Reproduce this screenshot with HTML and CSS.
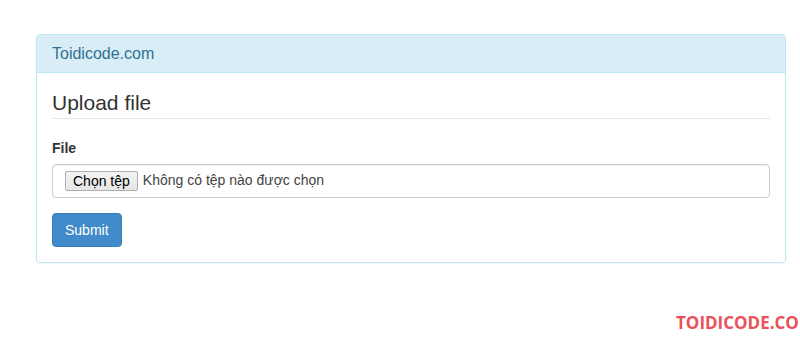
FILE: index.html
```html
<!DOCTYPE html>
<html>
<head>
    <title>Upload file</title>
    <meta charset="UTF-8">
    <meta name="viewport" content="width=device-width, initial-scale=1.0">
    <link rel="stylesheet" href="styles.css">
</head>
<body>
    <div class="page">
        <div class="panel">
            <div class="panel-heading">Toidicode.com</div>
            <div class="panel-body">
                <form onsubmit="return false;">
                    <legend>Upload file</legend>
                    <div class="form-group">
                        <label for="file">File</label>
                        <div class="form-control file-field">
                            <button type="button" class="file-btn">Chọn tệp</button>
                            <span class="file-name">Không có tệp nào được chọn</span>
                        </div>
                    </div>
                    <button type="submit" class="btn-primary">Submit</button>
                </form>
            </div>
        </div>
    </div>
    <div class="watermark">TOIDICODE.CO</div>
</body>
</html>
```

FILE: styles.css
```css
html, body {
    margin: 0;
    height: 100%;
    overflow: hidden;
}
body {
    font-family: "Liberation Sans", Arial, sans-serif;
    font-size: 14px;
    line-height: 1.42857;
    color: #333;
    background: #fff;
    position: relative;
}
.page {
    padding: 34px 0 0 36px;
}
.panel {
    width: 748px;
    border: 1px solid #bce8f1;
    border-radius: 4px;
    box-shadow: 0 1px 1px rgba(0, 0, 0, 0.05);
}
.panel-heading {
    padding: 10px 15px;
    background-color: #d9edf7;
    border-bottom: 1px solid #bce8f1;
    color: #31708f;
    font-size: 16px;
    line-height: 17px;
    border-radius: 3px 3px 0 0;
}
.panel-body {
    padding: 15px;
}
legend {
    display: block;
    width: 100%;
    padding: 0;
    margin-bottom: 20px;
    font-size: 21px;
    line-height: 30px;
    color: #333;
    border-bottom: 1px solid #e5e5e5;
}
.form-group {
    margin-bottom: 15px;
}
label {
    display: block;
    font-weight: bold;
    margin-bottom: 5px;
}
.form-control {
    box-sizing: border-box;
    height: 34px;
    padding: 6px 12px;
    border: 1px solid #ccc;
    border-radius: 4px;
    box-shadow: inset 0 1px 1px rgba(0, 0, 0, 0.075);
}
.file-field {
    display: flex;
    align-items: center;
    gap: 5px;
}
.file-btn {
    font-family: "Liberation Sans", Arial, sans-serif;
    font-size: 14px;
    line-height: 18px;
    padding: 0 7px;
    color: #000;
    background: linear-gradient(#f4f4f4, #e6e6e6);
    border: 1px solid #adadad;
    border-radius: 2px;
}
.file-name {
    color: #444;
}
.btn-primary {
    font-family: "Liberation Sans", Arial, sans-serif;
    font-size: 14px;
    line-height: 20px;
    padding: 6px 12px;
    color: #fff;
    background-color: #428bca;
    border: 1px solid #357ebd;
    border-radius: 4px;
    cursor: pointer;
}
.btn-primary:hover {
    background-color: #3276b1;
}
.watermark {
    position: absolute;
    left: 676px;
    top: 311px;
    font-family: "Open Sans", sans-serif;
    font-weight: bold;
    font-size: 17px;
    color: #e9525a;
    white-space: nowrap;
}
```
